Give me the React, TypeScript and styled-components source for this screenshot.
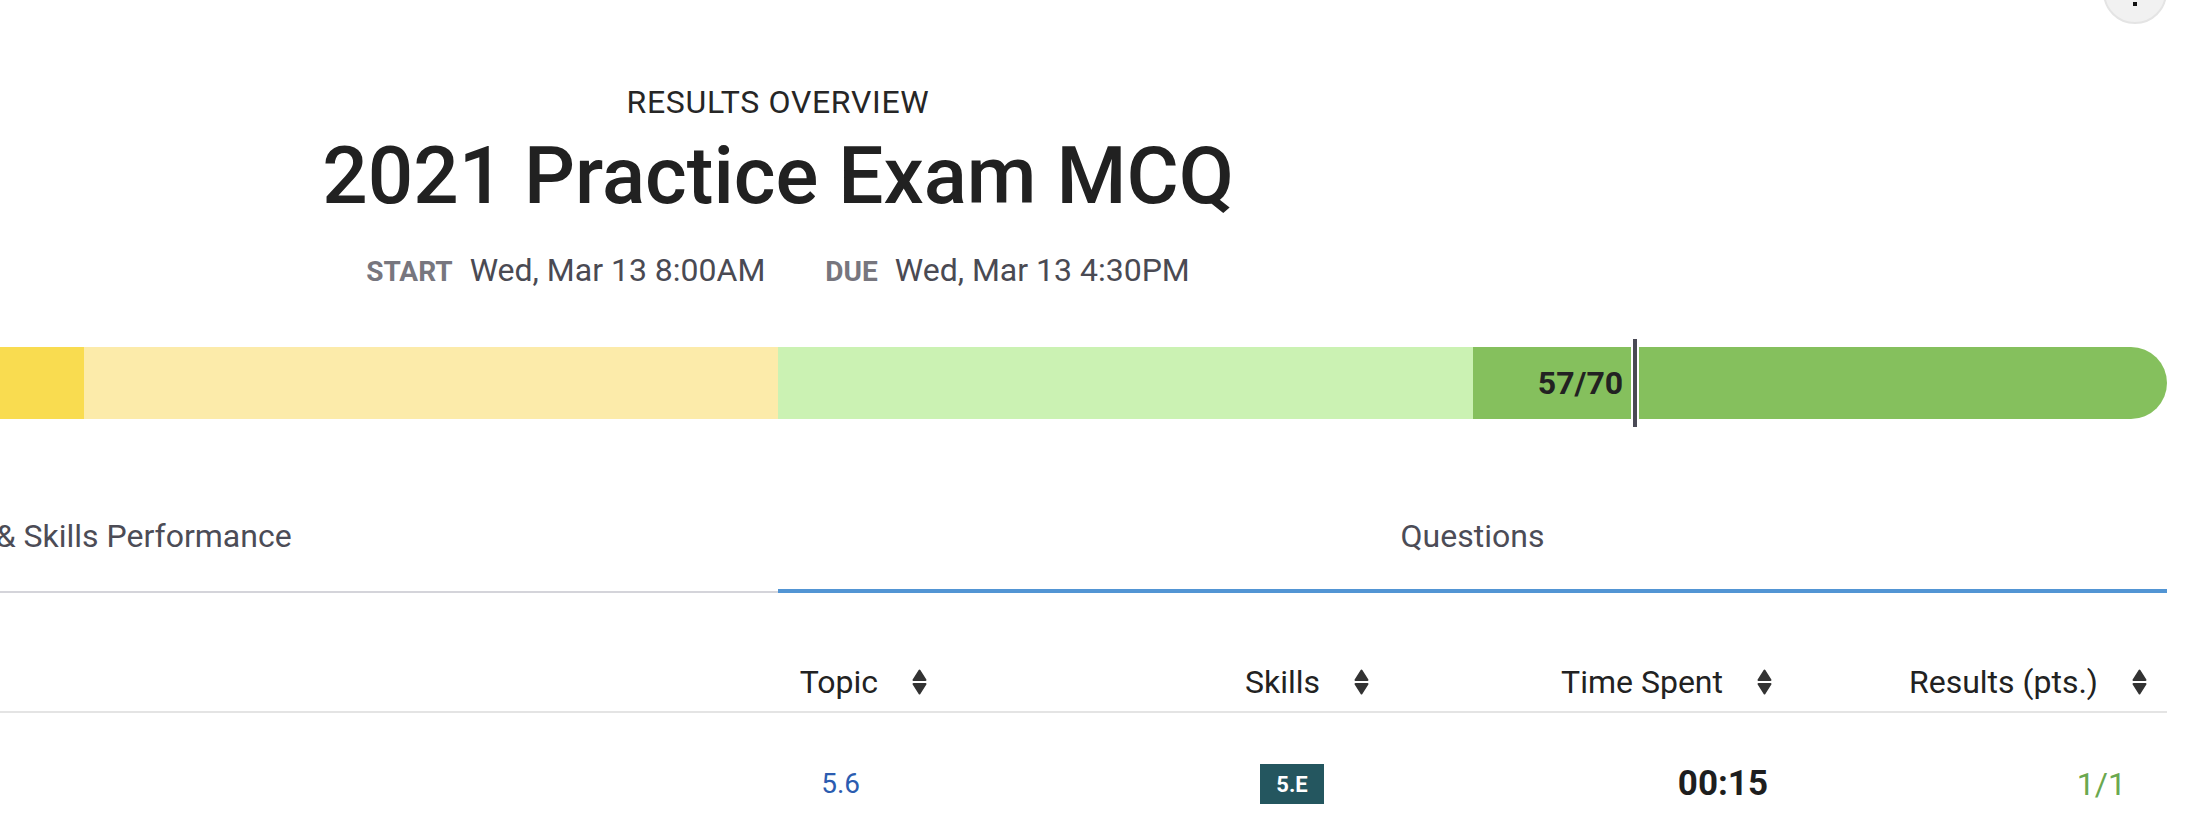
import React from "react";
import styled, { createGlobalStyle } from "styled-components";

const GlobalStyle = createGlobalStyle`
  html, body {
    margin: 0;
    padding: 0;
    background: #ffffff;
    overflow: hidden;
  }
  body {
    font-family: Roboto, "Liberation Sans", Arial, sans-serif;
    color: #222222;
  }
  * { box-sizing: border-box; }
`;

const Viewport = styled.div`
  position: relative;
  width: 2206px;
  height: 816px;
  overflow: hidden;
`;

const Page = styled.main`
  position: relative;
  width: 2778px;
  margin-left: -611px;
  padding-top: 82px;
`;

const MenuButton = styled.button`
  position: absolute;
  top: -40px;
  right: 0;
  width: 64px;
  height: 64px;
  padding: 0;
  border-radius: 50%;
  background: #f1f1f1;
  border: 2px solid #e4e4e4;
  display: flex;
  flex-direction: column;
  align-items: center;
  justify-content: center;
  gap: 8px;
`;

const Dot = styled.span`
  width: 4px;
  height: 4px;
  background: #111111;
`;

const Header = styled.header`
  display: flex;
  flex-direction: column;
  align-items: center;
`;

const Eyebrow = styled.div`
  font-size: 32px;
  line-height: 40px;
  letter-spacing: 0.7px;
  color: #262626;
  text-transform: uppercase;
`;

const Title = styled.h1`
  margin: 6px 0 0;
  font-size: 80px;
  line-height: 96px;
  font-weight: 500;
  color: #212121;
`;

const DateRow = styled.div`
  margin-top: 26px;
  display: flex;
  gap: 60px;
`;

const DateItem = styled.div`
  display: flex;
  align-items: baseline;
  gap: 17px;
`;

const DateLabel = styled.span`
  font-size: 28px;
  line-height: 40px;
  font-weight: 700;
  color: #77767e;
  text-transform: uppercase;
`;

const DateValue = styled.span`
  font-size: 32px;
  line-height: 40px;
  color: #4a4a53;
`;

const Bar = styled.div`
  position: relative;
  margin-top: 55px;
  height: 72px;
`;

const Track = styled.div`
  display: flex;
  height: 100%;
  border-radius: 36px;
  overflow: hidden;
`;

const Segment = styled.div<{ $color: string }>`
  flex: 1;
  background: ${(p) => p.$color};
`;

const Marker = styled.div`
  position: absolute;
  top: -8px;
  bottom: -8px;
  width: 8px;
  background: #4a4a55;
  background-clip: padding-box;
  border-left: 2px solid #ffffff;
  border-right: 2px solid #ffffff;
`;

const ScoreLabel = styled.span`
  position: absolute;
  right: calc(100% + 10px);
  top: 50%;
  transform: translateY(-50%);
  font-size: 32px;
  line-height: 40px;
  font-weight: 700;
  color: #222222;
  white-space: nowrap;
`;

const Tabs = styled.nav`
  display: flex;
  margin-top: 70px;
  border-bottom: 2px solid #d4d4da;
`;

const Tab = styled.div<{ $active?: boolean }>`
  flex: 1;
  margin-bottom: -2px;
  padding: 27px 0 33px;
  text-align: center;
  font-size: 32px;
  line-height: 40px;
  color: #4c4c56;
  border-bottom: 4px solid ${(p) => (p.$active ? "#5295d4" : "transparent")};
`;

const Table = styled.div`
  display: grid;
  grid-template-columns: 1138px 420px 442px 403px 375px;
`;

const HeadCell = styled.div<{ $start?: boolean }>`
  display: flex;
  align-items: center;
  justify-content: ${(p) => (p.$start ? "flex-start" : "flex-end")};
  gap: 34px;
  padding: 69px 20px 9px 24px;
  border-bottom: 2px solid #e4e4e4;
  font-size: 32px;
  line-height: 40px;
  color: #222222;
`;

const Cell = styled.div<{ $pad: number; $start?: boolean }>`
  display: flex;
  align-items: center;
  justify-content: ${(p) => (p.$start ? "flex-start" : "flex-end")};
  height: 142px;
  padding: 51px ${(p) => p.$pad}px 51px 24px;
`;

const TopicLink = styled.a`
  font-size: 28px;
  line-height: 40px;
  color: #2b5cb0;
  text-decoration: none;
`;

const SkillBadge = styled.span`
  display: inline-flex;
  align-items: center;
  justify-content: center;
  width: 64px;
  height: 40px;
  background: #24565f;
  color: #ffffff;
  font-size: 22px;
  font-weight: 700;
`;

const TimeValue = styled.span`
  font-size: 35px;
  line-height: 40px;
  font-weight: 700;
  color: #1e1e1e;
`;

const ResultValue = styled.span`
  font-size: 32px;
  line-height: 40px;
  color: #6aa84f;
`;

const QuestionNo = styled.span`
  font-size: 28px;
  line-height: 40px;
  color: #222222;
`;

const SortIcon = () => (
  <svg width="15" height="26" viewBox="0 0 15 26" aria-hidden="true">
    <path
      d="M7.5 1.5 L13.5 11 H1.5 Z"
      fill="#333333"
      stroke="#333333"
      strokeWidth="2"
      strokeLinejoin="round"
    />
    <path
      d="M1.5 15 H13.5 L7.5 24.5 Z"
      fill="#333333"
      stroke="#333333"
      strokeWidth="2"
      strokeLinejoin="round"
    />
  </svg>
);

const segments = ["#f9dc50", "#fcebaa", "#cbf2b3", "#85c05d"];
const markerPercent = 80.71;

const columns = [
  { label: "Question", sortable: false, pad: 20, start: true },
  { label: "Topic", sortable: true, pad: 87 },
  { label: "Skills", sortable: true, pad: 65 },
  { label: "Time Spent", sortable: true, pad: 24 },
  { label: "Results (pts.)", sortable: true, pad: 41 },
];

export default function App() {
  return (
    <Viewport>
      <GlobalStyle />
      <Page>
        <MenuButton aria-label="More options">
          <Dot />
          <Dot />
          <Dot />
        </MenuButton>

        <Header>
          <Eyebrow>Results Overview</Eyebrow>
          <Title>2021 Practice Exam MCQ</Title>
          <DateRow>
            <DateItem>
              <DateLabel>Start</DateLabel>
              <DateValue>Wed, Mar 13 8:00AM</DateValue>
            </DateItem>
            <DateItem>
              <DateLabel>Due</DateLabel>
              <DateValue>Wed, Mar 13 4:30PM</DateValue>
            </DateItem>
          </DateRow>
        </Header>

        <Bar>
          <Track>
            {segments.map((c) => (
              <Segment key={c} $color={c} />
            ))}
          </Track>
          <Marker style={{ left: `${markerPercent}%` }}>
            <ScoreLabel>57/70</ScoreLabel>
          </Marker>
        </Bar>

        <Tabs>
          <Tab>Content &amp; Skills Performance</Tab>
          <Tab $active>Questions</Tab>
        </Tabs>

        <Table>
          {columns.map((col) => (
            <HeadCell key={col.label} $start={col.start}>
              <span>{col.label}</span>
              {col.sortable && <SortIcon />}
            </HeadCell>
          ))}
          <Cell $pad={20} $start>
            <QuestionNo>1</QuestionNo>
          </Cell>
          <Cell $pad={columns[1].pad}>
            <TopicLink href="#">5.6</TopicLink>
          </Cell>
          <Cell $pad={columns[2].pad}>
            <SkillBadge>5.E</SkillBadge>
          </Cell>
          <Cell $pad={columns[3].pad}>
            <TimeValue>00:15</TimeValue>
          </Cell>
          <Cell $pad={columns[4].pad}>
            <ResultValue>1/1</ResultValue>
          </Cell>
        </Table>
      </Page>
    </Viewport>
  );
}
